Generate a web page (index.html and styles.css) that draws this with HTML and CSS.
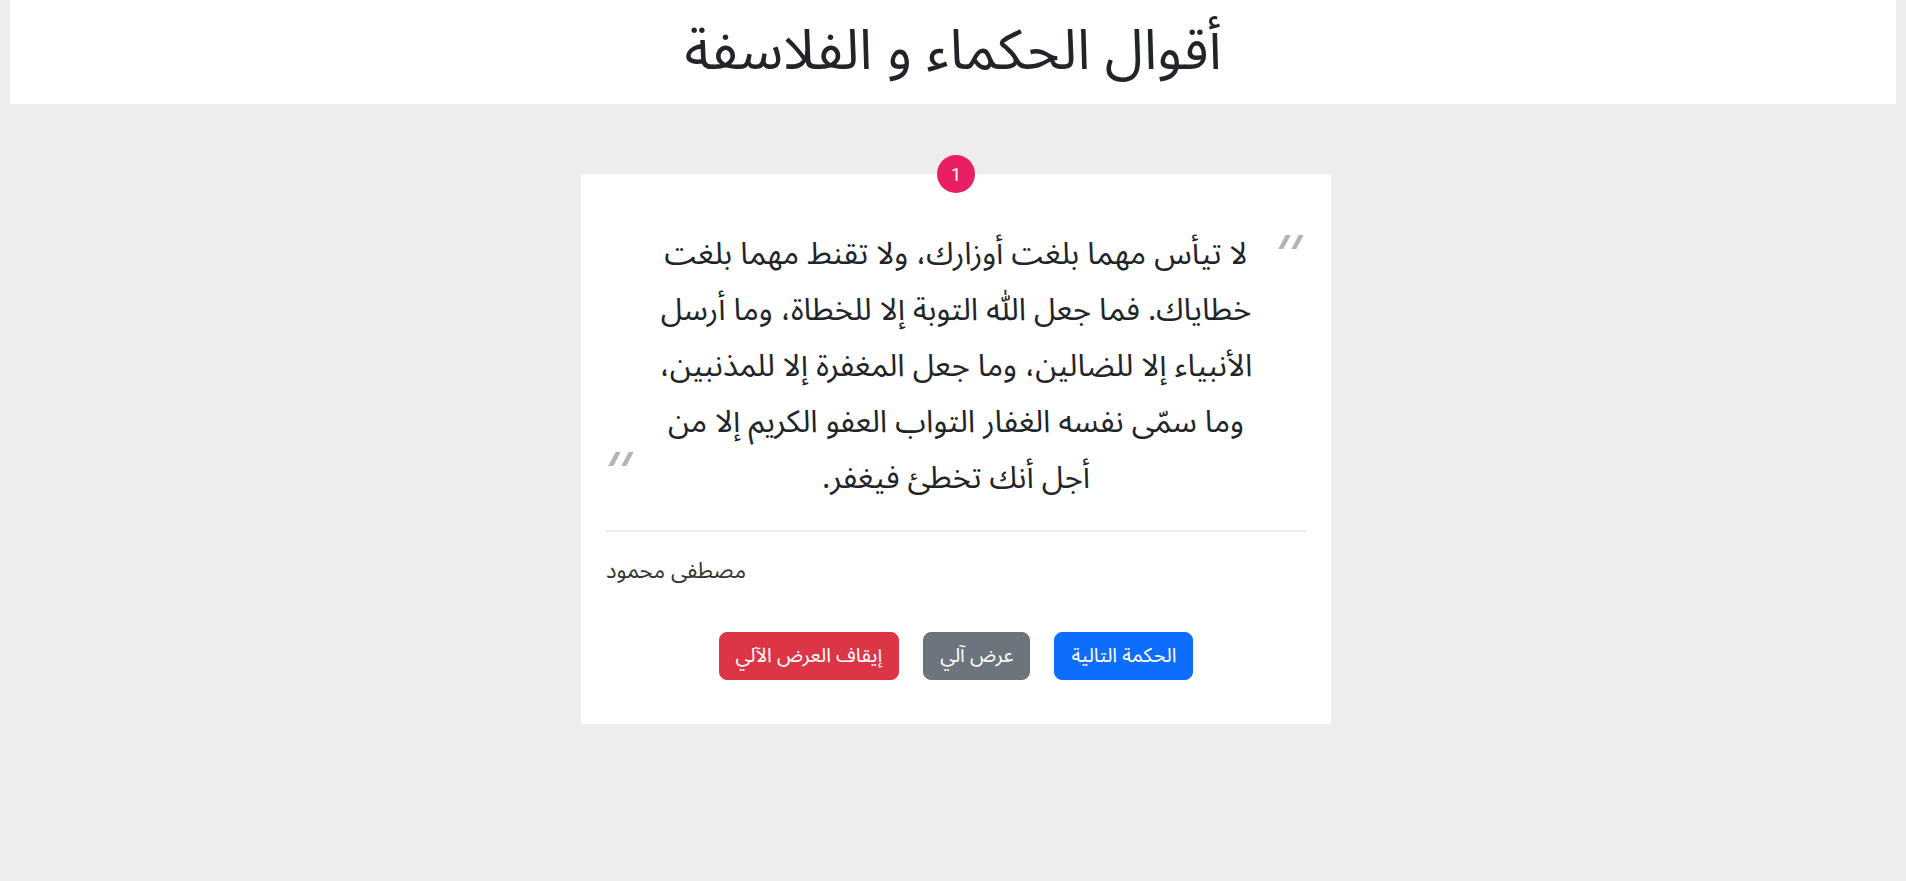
FILE: index.html
```html
<!DOCTYPE html>
<html lang="ar" dir="rtl">
<head>
<meta charset="utf-8">
<title>أقوال الحكماء و الفلاسفة</title>
<link rel="stylesheet" href="styles.css">
</head>
<body>
<header class="site-header">
  <h1 class="site-title">أقوال الحكماء و الفلاسفة</h1>
</header>
<main class="page">
  <section class="quote-card">
    <span class="quote-number">1</span>
    <blockquote class="quote-text">
      لا تيأس مهما بلغت أوزارك، ولا تقنط مهما بلغت<br>
      خطاياك. فما جعل اللّٰه التوبة إلا للخطاة، وما أرسل<br>
      الأنبياء إلا للضالين، وما جعل المغفرة إلا للمذنبين،<br>
      وما سمّى نفسه الغفار التواب العفو الكريم إلا من<br>
      أجل أنك تخطئ فيغفر.
    </blockquote>
    <hr class="divider">
    <p class="quote-author">مصطفى محمود</p>
    <div class="actions">
      <button class="btn btn-primary">الحكمة التالية</button>
      <button class="btn btn-secondary">عرض آلي</button>
      <button class="btn btn-danger">إيقاف العرض الآلي</button>
    </div>
  </section>
</main>
</body>
</html>
```
FILE: styles.css
```css
* { box-sizing: border-box; }
html, body { margin: 0; padding: 0; }
body {
  background: #ededed;
  color: #212529;
  font-family: "Noto Sans Arabic", "DejaVu Sans", sans-serif;
  min-height: 881px;
}
.site-header {
  background: #fff;
  margin: 0 10px;
  height: 104px;
  display: flex;
  align-items: center;
  justify-content: center;
}
.site-title {
  margin: 0;
  font-size: 56px;
  font-weight: 400;
  line-height: 1.6;
}
.page {
  padding-top: 70px;
  padding-left: 6px;
}
.quote-card {
  position: relative;
  width: 750px;
  margin: 0 auto;
  background: #fff;
  padding: 25px 25px 44px;
}
.quote-number {
  position: absolute;
  top: -19px;
  left: 50%;
  transform: translateX(-50%);
  width: 38px;
  height: 38px;
  border-radius: 50%;
  background: #e91e63;
  color: #fff;
  font-family: "Roboto", "Liberation Sans", sans-serif;
  font-size: 18px;
  font-weight: 400;
  display: flex;
  align-items: center;
  justify-content: center;
}
.quote-text {
  position: relative;
  margin: 27px 0 0;
  padding: 0 20px;
  font-size: 31px;
  line-height: 56px;
  text-align: center;
  color: #212529;
}
.quote-text::before,
.quote-text::after {
  content: "";
  position: absolute;
  width: 5px;
  height: 14px;
  background: #b3b3b3;
  transform: skewX(-28deg);
  box-shadow: 13px 0 0 #b3b3b3;
}
.quote-text::before {
  top: 9px;
  right: 19px;
}
.quote-text::after {
  bottom: 40px;
  left: 6px;
}
.divider {
  margin: 24px 0 0;
  border: 0;
  border-top: 2px solid #ececec;
  opacity: 1;
}
.quote-author {
  margin: 24px 0 0;
  text-align: left;
  font-size: 22px;
  line-height: 30px;
  color: #333;
}
.actions {
  margin-top: 46px;
  display: flex;
  justify-content: center;
  gap: 24px;
}
.btn {
  font-family: inherit;
  font-size: 20px;
  line-height: 30px;
  padding: 8px 16px;
  border: 1px solid transparent;
  border-radius: 8px;
  color: #fff;
}
.btn-primary { background: #0d6efd; border-color: #0d6efd; }
.btn-secondary { background: #6c757d; border-color: #6c757d; }
.btn-danger { background: #dc3545; border-color: #dc3545; }
```
